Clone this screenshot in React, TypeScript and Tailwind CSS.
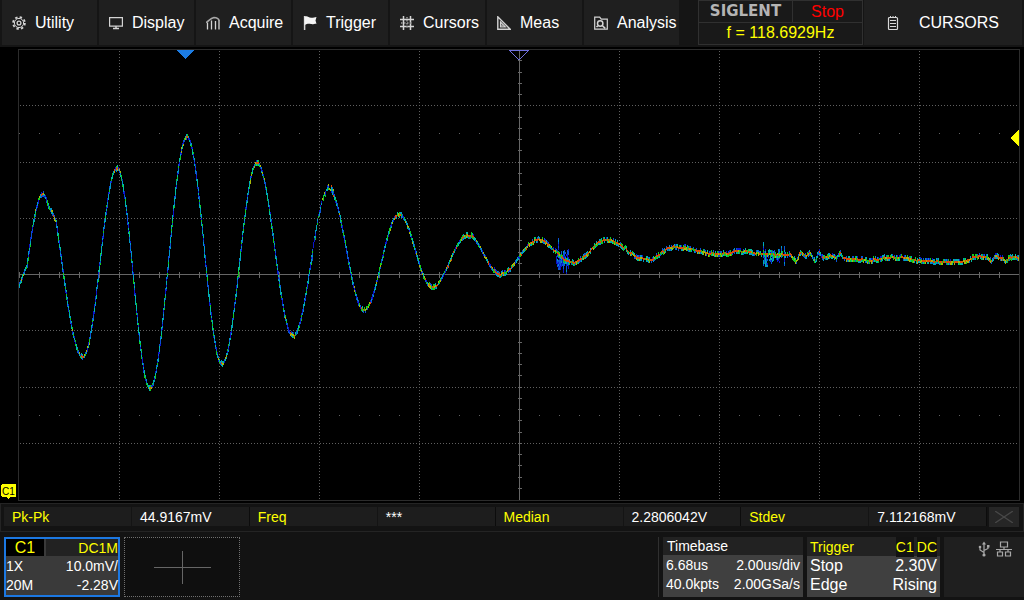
import type { ReactNode } from "react";

const TABS = [
  { id: "utility", label: "Utility", icon: <GearIcon /> },
  { id: "display", label: "Display", icon: <DisplayIcon /> },
  { id: "acquire", label: "Acquire", icon: <AcquireIcon /> },
  { id: "trigger", label: "Trigger", icon: <FlagIcon /> },
  { id: "cursors", label: "Cursors", icon: <HashIcon /> },
  { id: "meas", label: "Meas", icon: <MeasIcon /> },
  { id: "analysis", label: "Analysis", icon: <AnalysisIcon /> },
];

const MEASUREMENTS = [
  { label: "Pk-Pk", value: "44.9167mV" },
  { label: "Freq", value: "***" },
  { label: "Median", value: "2.2806042V" },
  { label: "Stdev", value: "7.112168mV" },
];

function Icon({ children }: { children: ReactNode }) {
  return (
    <svg viewBox="0 0 14 14" className="w-3.5 h-3.5 shrink-0" fill="none" stroke="#d4d4d4" strokeWidth="1.2" aria-hidden="true">
      {children}
    </svg>
  );
}

function GearIcon() {
  return (
    <Icon>
      <circle cx="7" cy="7" r="4.6" strokeWidth="1" />
      <circle cx="7" cy="7" r="5.9" strokeWidth="1.8" strokeDasharray="2.400 2.230" />
      <circle cx="7" cy="7" r="1.9" strokeWidth="1.300" />
    </Icon>
  );
}

function DisplayIcon() {
  return (
    <Icon>
      <path d="M0.6 1.6h12.8v8.500H0.6z" />
      <path d="M7 10v2.400M4 12.400h6" strokeWidth="1.500" />
    </Icon>
  );
}

function AcquireIcon() {
  return (
    <Icon>
      <path d="M1.500 13.500V6.500M5.500 13.500V4.500M9.500 13.500V5M13 13.500V4" strokeWidth="1.300" />
      <path d="M0 6.600C3 5 4 2.400 8 1.400c3 0 4.500 1 5.200 3.200" stroke="#a8a8a8" strokeWidth="1.500" />
    </Icon>
  );
}

function FlagIcon() {
  return (
    <Icon>
      <path d="M1.600 0v14" strokeWidth="1.500" />
      <path d="M1.600 0.800c3-1.500 4 1.300 7 .9 2-.1 3-.6 4.900-.8l-1 3.500 1 3.300c-2.500.1-3.500.8-5.500.4-2.500-.8-4-.2-6.400.8z" fill="#f4f4f4" stroke="none" />
    </Icon>
  );
}

function HashIcon() {
  return (
    <Icon>
      <path d="M3.500 0v14M10.500 0v14M0 3.500h14M0 10.500h14" strokeWidth="1.500" />
      <path d="M7 1v12M1 7h12" stroke="#9a9a9a" strokeWidth="1.500" strokeDasharray="1.500 1.500" />
    </Icon>
  );
}

function MeasIcon() {
  return (
    <Icon>
      <path d="M0.800 0.800V13.200H13.200Z" strokeWidth="1.400" />
      <path d="M3.500 6v4.800h4.800z" />
      <path d="M5 8.500v1.500" />
    </Icon>
  );
}

function AnalysisIcon() {
  return (
    <Icon>
      <path d="M13.300 13.200H0.700V1.200h5l1.500 2h6.100z" />
      <circle cx="6.200" cy="7.500" r="2.700" strokeWidth="1.500" />
      <path d="M8.200 9.500l3 2.800M3.800 9.800L2.500 11" strokeWidth="1.600" />
    </Icon>
  );
}

// --- trace -------------------------------------------------------------

const KEYS: [number, number][] = [
  [19, 286], [25, 270], [27, 266], [43, 194], [52, 211], [56, 221], [83, 357],
  [117, 168], [150, 388], [187, 137], [222, 364], [257, 163], [293, 336],
  [329, 189], [364, 310], [399, 214], [432, 287], [468, 235], [500, 274],
  [538, 240], [572, 262], [606, 240], [647, 260], [673, 247], [719, 254],
  [744, 251], [762, 254], [790, 255], [796, 261], [801, 252], [805, 256],
  [810, 253], [815, 261], [819, 252], [823, 257], [832, 256], [836, 259],
  [840, 253], [844, 259], [868, 260], [888, 258], [907, 258], [920, 261],
  [957, 262], [978, 257], [987, 257], [991, 261], [996, 256], [1000, 257],
  [1004, 260], [1014, 257], [1019, 258],
];

// cold to hot, like the colour grade of the scope
const GRADE = ["#0a14cc", "#0a54d4", "#0098c8", "#00bea0", "#10cc20", "#a8b808", "#dc4a08"];

function makeRandom(seed: number) {
  let s = seed;
  return () => {
    s = (s * 1664525 + 1013904223) % 4294967296;
    return s / 4294967296;
  };
}

function levelAt(x: number) {
  let i = 0;
  while (i < KEYS.length - 2 && x > KEYS[i + 1][0]) i++;
  const [x0, y0] = KEYS[i];
  const [x1, y1] = KEYS[i + 1];
  const t = (x - x0) / (x1 - x0);
  // the first bends are straight pieces joined by smooth humps
  if (i < 2 || i === 4) return y0 + (y1 - y0) * t;
  if (i === 2) return y0 + (y1 - y0) * Math.sin((t * Math.PI) / 2);
  if (i === 5) return y0 + (y1 - y0) * Math.sin((t * Math.PI) / 2) ** 1.1;
  return y0 + ((y1 - y0) * (1 - Math.cos(t * Math.PI))) / 2;
}

function buildTrace() {
  const random = makeRandom(71);
  const paths = GRADE.map(() => "");
  const dot = (x: number, y: number, h: number, grade: number) => {
    paths[Math.max(0, Math.min(GRADE.length - 1, grade))] += `M${x} ${y}h1v${h}h-1z`;
  };

  let wobble = 0;
  for (let x = 19; x < 1019; x++) {
    let y = levelAt(x);
    const next = levelAt(x + 1);
    const slope = Math.abs(next - y);
    const ringing = x > 311 && x < 334;
    if (ringing) y += (random() - 0.5) * 9;
    if (slope > 1.100 || ringing) {
      const from = Math.round(Math.min(y, next)) - 1;
      const to = Math.round(Math.max(y, next)) + 1;
      for (let py = from; py < to; py += 2) {
        dot(x, py, 2, Math.floor(random() * (slope > 5 ? 4.600 : slope > 2.500 ? 5.500 : 6.600)));
      }
    } else {
      if (x % 3 === 0) wobble = (random() - 0.5) * 1.600;
      const mid = Math.round(y + wobble);
      dot(x, mid - 1, 2, random() > 0.4 ? 6 : 4 + Math.floor(random() * 2));
      if (random() > 0.15) dot(x, mid + 1, 2, 1 + Math.floor(random() * 4.800));
      if (random() > 0.4) dot(x, mid - 3, 2, Math.floor(random() * 5));
    }
    // switching noise bursts
    if (x > 555 && x < 569) {
      const top = x === 558 ? 238 : 248 + random() * 9;
      const bottom = x === 563 || x === 566 ? 273 : 262 + random() * 9;
      for (let py = Math.round(top); py < bottom; py += 2) {
        if (random() > 0.08) dot(x, py, 2, Math.floor(random() * 2.600));
      }
    }
    if (x > 762 && x < 780) {
      const top = x === 763 ? 242 : 248 + random() * 6;
      const bottom = x < 768 ? 266 : 256 + random() * 7;
      for (let py = Math.round(top); py < bottom; py += 2) {
        if (random() > 0.15) dot(x, py, 2, Math.floor(random() * 4.200));
      }
    }
    if (x === 781 || x === 784) {
      for (let py = 246; py < (x === 784 ? 266 : 258); py += 2) dot(x, py, 2, Math.floor(random() * 4));
    }
  }
  return paths;
}

const TRACE = buildTrace();

const COLUMNS = [119, 219, 319, 419, 619, 719, 819, 919];
const ROWS = [105, 162, 218, 330, 387, 443];
const TICKS_X = Array.from({ length: 50 }, (_, i) => 19 + i * 20);
const TICKS_Y = Array.from({ length: 39 }, (_, i) => Math.round(60.25 + i * 11.25));

function Plot() {
  return (
    <svg viewBox="0 47 1024 456" className="block w-full h-auto bg-black" shapeRendering="crispEdges" role="img" aria-label="Channel 1 waveform">
      <rect x="18.5" y="49.5" width="1001" height="451" fill="none" stroke="#2c2c2c" />

      {/* graticule */}
      <g stroke="#606060" strokeDasharray="1 2">
        {COLUMNS.map((x) => <path key={x} d={`M${x + 0.5} 51V500`} />)}
        {ROWS.map((y) => <path key={y} d={`M20 ${y + 0.5}H1019`} />)}
      </g>
      <g stroke="#606060" strokeDasharray="1 19">
        <path d="M19 133.500H1019" />
        <path d="M19 415.500H1019" />
      </g>
      <g stroke="#666666">
        <path d="M19 274.500H1019M519.500 50V500" />
        <path d={TICKS_X.map((x) => `M${x + 0.5} 272v6`).join("")} />
        <path d={TICKS_Y.map((y) => `M518 ${y + 0.5}h4`).join("")} />
      </g>

      {TRACE.map((d, i) => <path key={i} d={d} fill={GRADE[i]} />)}

      {/* delay, trigger position and trigger level markers */}
      <path d="M176 50h18l-9 9z" fill="#1c7ce4" />
      <path d="M509.500 50.500h19l-9.500 9.500z" fill="none" stroke="#7070e0" />
      <path d="M1019 130v16l-9-8z" fill="#ffff00" />

      <path d="M2 484h13l1 1v11l-1 1h-5l-2 2l-2-2h-4l-1-1v-11z" fill="#ffff00" />
      <text x="2" y="495" fontSize="10" fill="#000000" className="font-['Liberation_Sans',sans-serif]">C1</text>
    </svg>
  );
}

function Header() {
  return (
    <header className="flex h-[47px] bg-[#151515] px-0.5 pb-0.5">
      <nav className="grid flex-1 grid-cols-7 gap-0.5 mr-[19px]">
        {TABS.map((tab) => (
          <button key={tab.id} type="button" className="flex items-center gap-[9px] bg-[#1f1f1f] pl-2.5 text-base text-white">
            {tab.icon}
            {tab.label}
          </button>
        ))}
      </nav>

      <div className="flex w-[165px] flex-col border border-[#303030] bg-[#191919]">
        <div className="flex h-[22px] border-b border-[#303030]">
          <div className="flex w-[94px] items-center justify-center border-r border-[#303030] pb-0.5 font-['DejaVu_Sans',sans-serif] text-[15px] font-bold leading-4 text-[#b4b4b4]">
            SIGLENT
          </div>
          <div className="flex flex-1 items-center justify-center text-base text-[#ff0000]">Stop</div>
        </div>
        <div className="flex flex-1 items-center justify-center pb-0.5 text-base leading-5 text-[#ffff00]">f = 118.6929Hz</div>
      </div>

      <button type="button" className="ml-px flex w-[158px] items-center gap-5 bg-[#1f1f1f] pl-[23px] text-base text-white">
        <svg viewBox="0 0 12 14" className="h-3.5 w-3 shrink-0" fill="none" stroke="#d8d8d8" aria-hidden="true">
          <rect x="1.500" y="1.500" width="9" height="12" rx="1" strokeWidth="1.200" />
          <path d="M3 4.500h6M3 7.500h6M3 10.500h6M3.500 0v2M6 0v2M8.500 0v2" />
        </svg>
        CURSORS
      </button>
    </header>
  );
}

function MeasureBar() {
  return (
    <section className="flex h-[29px] items-start gap-0.5 border border-[#242424] bg-[#131313] pl-[3px] pr-1 pt-[3px] text-sm">
      <dl className="grid flex-1 grid-cols-4">
        {MEASUREMENTS.map((m) => (
          <div key={m.label} className="flex h-[19px] items-center">
            <dt className="flex h-full w-[128px] items-center border-r border-[#141414] bg-[#1d1d1d] pl-2 text-[#ffff00]">{m.label}</dt>
            <dd className="flex h-full flex-1 items-center border-r border-[#0c0c0c] bg-[#1d1d1d] pl-2 text-white">{m.value}</dd>
          </div>
        ))}
      </dl>
      <button type="button" aria-label="Close measurements" className="flex h-5 w-[30px] items-center justify-center bg-[#262626]">
        <svg viewBox="0 0 18 12" className="h-3 w-[18px]" stroke="#484848" strokeWidth="1.300">
          <path d="M0 0L18 12M18 0L0 12" />
        </svg>
      </button>
    </section>
  );
}

function Row({ left, right }: { left: string; right: string }) {
  return (
    <span className="flex h-[19px] items-center justify-between">
      <span>{left}</span>
      <span>{right}</span>
    </span>
  );
}

function Footer() {
  return (
    <footer className="flex flex-1 items-start bg-[#131313] pt-[5px] text-sm text-white">
      <button type="button" className="ml-1 flex h-[60px] w-[116px] flex-col border-2 border-[#1c78e2] bg-[#3a3a3a]">
        <span className="flex h-[17px] w-full gap-0.5">
          <span className="flex w-[38px] items-center justify-center bg-black text-base leading-4 text-[#ffff00]">C1</span>
          <span className="flex flex-1 items-center justify-end bg-[#222222] text-[#ffff00]">DC1M</span>
        </span>
        <span className="w-full">
          <Row left="1X" right="10.0mV/" />
          <Row left="20M" right="-2.28V" />
        </span>
      </button>

      <button type="button" aria-label="Add channel" className="ml-1 flex h-[60px] w-[116px] items-center justify-center border border-dotted border-[#707070] bg-[#0f0f0f]">
        <svg viewBox="0 0 57 33" className="h-[33px] w-[57px]" stroke="#666666" shapeRendering="crispEdges">
          <path d="M0 16.500H57M28.500 0V33" />
        </svg>
      </button>

      <div className="ml-auto h-[60px] w-px bg-[#303030]" />

      <button type="button" className="ml-1 flex h-[60px] w-[140px] flex-col bg-[#404040] text-left">
        <span className="flex h-[18px] w-full items-center bg-[#222222] pl-1">Timebase</span>
        <span className="w-full px-[3px]">
          <Row left="6.68us" right="2.00us/div" />
          <Row left="40.0kpts" right="2.00GSa/s" />
        </span>
      </button>

      <button type="button" className="ml-1 flex h-[60px] w-[133px] flex-col bg-[#404040] text-left">
        <span className="flex h-[19px] w-full items-center justify-end gap-[3px] bg-[#222222] px-[3px] text-[#ffff00]">
          <span className="mr-auto">Trigger</span>
          <span className="bg-[#121212]">C1</span>
          <span className="bg-[#121212]">DC</span>
        </span>
        <span className="w-full px-[3px] text-base">
          <Row left="Stop" right="2.30V" />
          <Row left="Edge" right="Rising" />
        </span>
      </button>

      <div className="ml-1 flex h-[60px] w-20 items-start justify-end gap-1.5 bg-[#1f1f1f] pr-3 pt-1">
        <svg viewBox="0 0 12 16" className="h-4 w-3" fill="none" stroke="#a8a8a8" strokeWidth="1.200" aria-label="USB">
          <path d="M6 2v12M6 11.500L2 9V6M6 9.500L10 7.500V5" />
          <path d="M4 3.500L6 0.500L8 3.500z" fill="#a8a8a8" stroke="none" />
          <circle cx="6" cy="14" r="1.600" fill="#a8a8a8" stroke="none" />
          <circle cx="2" cy="6" r="1.300" fill="#a8a8a8" stroke="none" />
          <path d="M9 4h2.500v2.500H9z" fill="#a8a8a8" stroke="none" />
        </svg>
        <svg viewBox="0 0 16 16" className="h-4 w-4" fill="none" stroke="#a8a8a8" strokeWidth="1.200" aria-label="LAN">
          <path d="M4.500 1h7v5h-7zM1.500 11h5v4h-5zM9.500 11h5v4h-5zM8 6v2.500M0 8.500h16M4 8.500V11M12 8.500V11" />
        </svg>
      </div>
    </footer>
  );
}

export default function App() {
  return (
    <div className="flex min-h-screen flex-col bg-black font-['Liberation_Sans',Arial,sans-serif]">
      <Header />
      <Plot />
      <MeasureBar />
      <Footer />
    </div>
  );
}
